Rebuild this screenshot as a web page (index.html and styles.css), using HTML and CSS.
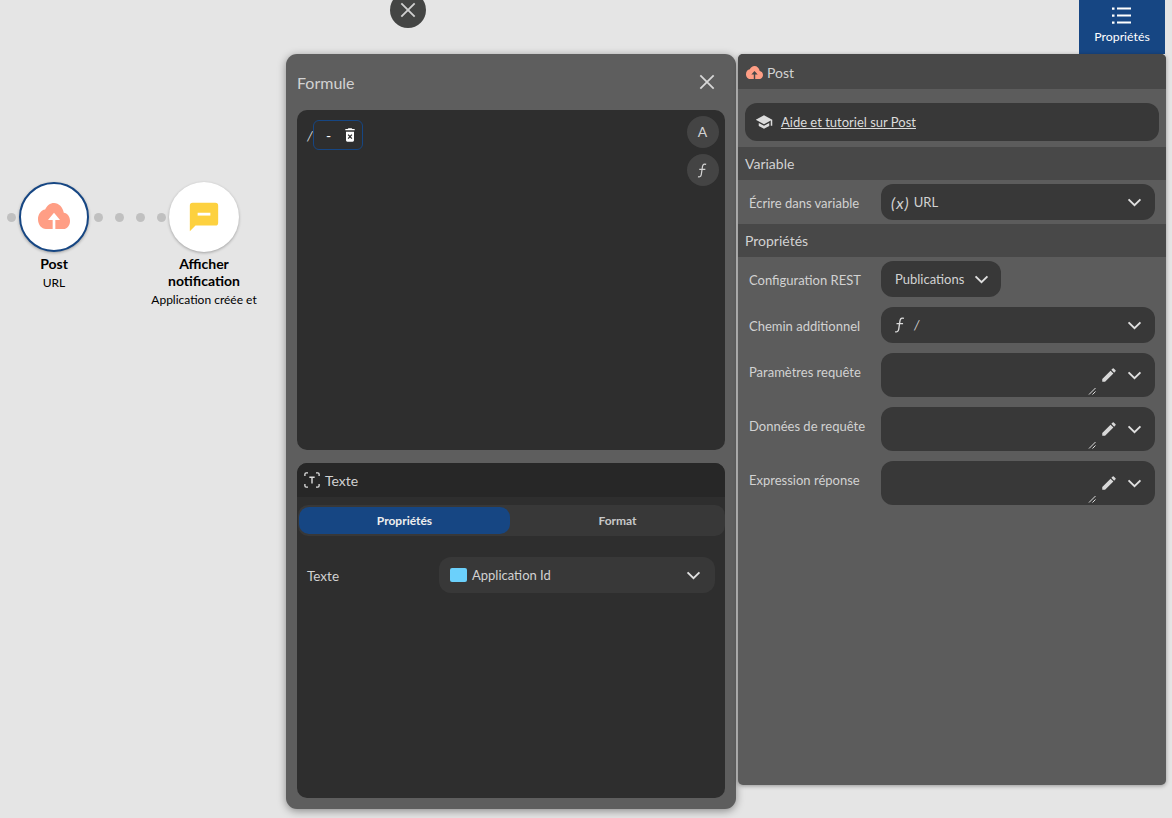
FILE: index.html
```html
<!DOCTYPE html>
<html lang="fr">
<head>
<meta charset="utf-8">
<title>Formule</title>
<link rel="stylesheet" href="styles.css">
</head>
<body>
<svg width="0" height="0" class="defs">
  <symbol id="cloud" viewBox="0 4 24 16" preserveAspectRatio="none"><path d="M19.35 10.04C18.67 6.59 15.64 4 12 4 9.11 4 6.6 5.64 5.35 8.04 2.34 8.36 0 10.95 0 14c0 3.31 2.69 6 6 6h5v-5.500H7.500L12 10l4.500 4.500H13V20h6c2.760 0 5-2.240 5-5 0-2.640-2.050-4.780-4.650-4.960z"/></symbol>
  <symbol id="chev" viewBox="0 0 24 24"><path d="M4.500 8 12 15.500 19.500 8" fill="none" stroke="currentColor" stroke-width="2.400"/></symbol>
  <symbol id="pen" viewBox="0 0 24 24"><path fill="currentColor" d="M3 17.250V21h3.750L17.810 9.940l-3.750-3.750L3 17.250zM20.710 7.040a1 1 0 0 0 0-1.410l-2.340-2.340a1 1 0 0 0-1.410 0l-1.830 1.830 3.750 3.750 1.830-1.830z"/></symbol>
  <symbol id="resize" viewBox="0 0 8 8"><path d="M1 7.500 7.500 1M4.500 7.500l3-3" stroke="#ddd" stroke-width="1" fill="none"/></symbol>
  <symbol id="fn" viewBox="0 0 16 20"><path d="M12.500 2.500C10 1.500 8.500 2.500 8 5L6.500 15c-.4 2.500-2 3.300-4 2.500M4 8.500h7.500" fill="none" stroke="currentColor" stroke-width="1.500"/></symbol>
</svg>

<div class="node node-post">
  <span class="disc disc-active"><svg class="cloud-big"><use href="#cloud"/></svg></span>
  <b class="node-title">Post</b>
  <span class="node-sub">URL</span>
</div>
<div class="node node-notif">
  <span class="disc"><svg class="msg" viewBox="0 0 24 24"><path fill="#fdd13f" d="M4 2h16a2 2 0 0 1 2 2v12a2 2 0 0 1-2 2H6l-4 4V4a2 2 0 0 1 2-2z"/><path fill="#fff" d="M7.500 9h9v2h-9z"/></svg></span>
  <b class="node-title">Afficher notification</b>
  <span class="node-sub">Application créée et</span>
</div>
<i class="dot d1"></i><i class="dot d2"></i><i class="dot d3"></i><i class="dot d4"></i><i class="dot d5"></i>

<button class="close-round"><svg viewBox="0 0 24 24"><path d="M4 4l16 16M20 4 4 20" stroke="currentColor" stroke-width="2.200"/></svg></button>

<div class="tab-props">
  <svg viewBox="0 0 20 20"><path d="M5 3.500h14M5 10.500h14M5 17.500h14" stroke="#fff" stroke-width="1.800"/><path d="M0 2.500h2.500v2.200H0zM0 9.500h2.500v2.200H0zM0 16.500h2.500v2.200H0z" fill="#fff"/></svg>
  <span>Propriétés</span>
</div>

<section class="formula">
  <header class="formula-head">
    <span>Formule</span>
    <svg viewBox="0 0 24 24"><path d="M4 4l16 16M20 4 4 20" stroke="currentColor" stroke-width="2.100"/></svg>
  </header>
  <div class="editor">
    <div class="tokens">
      <span class="slash">/</span>
      <span class="token">
        <span class="dash">-</span>
        <svg viewBox="0 0 24 24"><path fill="#fff" d="M15.500 3l-1-1h-5l-1 1H5v2h14V3zM6 7v13a2 2 0 0 0 2 2h8a2 2 0 0 0 2-2V7H6z"/><path d="M9.200 11.500l5.600 6M14.800 11.500l-5.600 6" stroke="#2e2e2e" stroke-width="2"/></svg>
      </span>
    </div>
    <div class="editor-tools">
      <span class="tool">A</span>
      <span class="tool"><svg class="fn-icon"><use href="#fn"/></svg></span>
    </div>
  </div>
  <div class="text-card">
    <div class="text-head">
      <svg viewBox="0 0 18 18"><path d="M1 4.500V2.500A1.500 1.500 0 0 1 2.500 1H4.500M13.500 1h2A1.500 1.500 0 0 1 17 2.500V4.500M17 13.500v2a1.500 1.500 0 0 1-1.500 1.500H13.500M4.500 17H2.500A1.500 1.500 0 0 1 1 15.500V13.500" fill="none" stroke="#ddd" stroke-width="1.500"/><path d="M6 6h6M9 6v7" stroke="#ddd" stroke-width="1.600" fill="none"/></svg>
      <span>Texte</span>
    </div>
    <div class="tabs">
      <span class="tab tab-on">Propriétés</span>
      <span class="tab">Format</span>
    </div>
    <div class="text-row">
      <label>Texte</label>
      <div class="select select-dark">
        <i class="swatch"></i>
        <span class="select-text">Application Id</span>
        <svg class="chev"><use href="#chev"/></svg>
      </div>
    </div>
  </div>
</section>

<aside class="props">
  <header class="props-head">
    <svg class="cloud-small"><use href="#cloud"/></svg>
    <span>Post</span>
  </header>
  <div class="help">
    <svg viewBox="0 0 24 24"><path fill="#ddd" d="M12 3 1 9l11 6 9-4.900V17h2V9L12 3zM5 13.200v4L12 21l7-3.800v-4L12 17l-7-3.800z"/></svg>
    <a>Aide et tutoriel sur Post</a>
  </div>
  <h3 class="section">Variable</h3>
  <div class="row">
    <label>Écrire dans variable</label>
    <div class="select">
      <em class="var-mark">(x)</em>
      <span class="select-text">URL</span>
      <svg class="chev"><use href="#chev"/></svg>
    </div>
  </div>
  <h3 class="section">Propriétés</h3>
  <div class="row">
    <label>Configuration REST</label>
    <div class="select select-fit">
      <span class="select-text">Publications</span>
      <svg class="chev"><use href="#chev"/></svg>
    </div>
  </div>
  <div class="row gap">
    <label>Chemin additionnel</label>
    <div class="select">
      <svg class="fn-mark"><use href="#fn"/></svg>
      <span class="select-text slash-small">/</span>
      <svg class="chev"><use href="#chev"/></svg>
    </div>
  </div>
  <div class="row gap row-tall">
    <label>Paramètres requête</label>
    <div class="select select-area">
      <svg class="pen"><use href="#pen"/></svg>
      <svg class="chev"><use href="#chev"/></svg>
      <svg class="grip"><use href="#resize"/></svg>
    </div>
  </div>
  <div class="row gap row-tall">
    <label>Données de requête</label>
    <div class="select select-area">
      <svg class="pen"><use href="#pen"/></svg>
      <svg class="chev"><use href="#chev"/></svg>
      <svg class="grip"><use href="#resize"/></svg>
    </div>
  </div>
  <div class="row gap row-tall">
    <label>Expression réponse</label>
    <div class="select select-area">
      <svg class="pen"><use href="#pen"/></svg>
      <svg class="chev"><use href="#chev"/></svg>
      <svg class="grip"><use href="#resize"/></svg>
    </div>
  </div>
</aside>
</body>
</html>
```
FILE: styles.css
```css
* { box-sizing: border-box; }
html, body { margin: 0; height: 100%; }
body {
  position: relative;
  width: 1172px;
  height: 818px;
  overflow: hidden;
  background: #e5e5e5;
  font-family: Lato, sans-serif;
  font-size: 14px;
  color: #d2d2d2;
}
.defs { position: absolute; }

/* Diagram */
.node {
  position: absolute;
  top: 182px;
  width: 110px;
  display: flex;
  flex-direction: column;
  align-items: center;
  text-align: center;
  color: #000;
}
.node-post { left: -1px; }
.node-notif { left: 149px; }
.disc {
  width: 70px;
  height: 70px;
  border-radius: 50%;
  background: #fff;
  box-shadow: 0 1px 3px rgba(0,0,0,.3);
  display: flex;
  align-items: center;
  justify-content: center;
  margin-bottom: 3px;
}
.disc-active { border: 2px solid #164683; }
.cloud-big { width: 32px; height: 26px; fill: #ff9e85; margin-top: -2px; }
.msg { width: 34px; height: 34px; }
.node-title { font-size: 14px; line-height: 17px; font-weight: 700; width: 90px; }
.node-sub { font-size: 12px; line-height: 14px; margin-top: 4px; white-space: nowrap; }
.dot {
  position: absolute;
  top: 213px;
  width: 9px;
  height: 9px;
  border-radius: 50%;
  background: #c0c0c0;
}
.d1 { left: 7px; }
.d2 { left: 94px; }
.d3 { left: 115px; }
.d4 { left: 136px; }
.d5 { left: 157px; }

/* Floating controls */
.close-round {
  position: absolute;
  left: 390px;
  top: -8px;
  width: 36px;
  height: 36px;
  padding: 8px;
  border: 0;
  border-radius: 50%;
  background: #444544;
  color: #d0d0d0;
}
.close-round svg { display: block; width: 20px; height: 20px; }
.tab-props {
  position: absolute;
  left: 1079px;
  top: 0;
  width: 86px;
  height: 54px;
  background: #164683;
  color: #fff;
  font-size: 12.300px;
  display: flex;
  flex-direction: column;
  align-items: center;
  padding-top: 5px;
  gap: 4px;
}
.tab-props svg { width: 20px; height: 20px; }

/* Formula window */
.formula {
  position: absolute;
  left: 286px;
  top: 54px;
  width: 450px;
  height: 755px;
  padding: 0 11px 11px;
  border-radius: 11px;
  background: #5e5e5e;
  box-shadow: 0 2px 8px rgba(0,0,0,.4);
  display: flex;
  flex-direction: column;
}
.formula-head {
  height: 56px;
  flex: none;
  display: flex;
  align-items: center;
  justify-content: space-between;
  font-size: 16px;
  color: #d2d2d2;
  padding: 0 8px 0 0;
}
.formula-head svg { width: 20px; height: 20px; color: #d8d8d8; }
.editor {
  height: 340px;
  flex: none;
  background: #2e2e2e;
  border-radius: 10px;
  padding: 10px 6px 0 10px;
  display: flex;
  justify-content: space-between;
  align-items: flex-start;
}
.tokens { display: flex; align-items: center; }
.slash { font-size: 14px; font-style: italic; width: 6px; }
.token {
  width: 50px;
  height: 30px;
  border: 1px solid #164683;
  border-radius: 6px;
  display: flex;
  align-items: center;
  padding-left: 12px;
  color: #fff;
  gap: 11px;
}
.dash { font-size: 14px; }
.token svg { width: 16px; height: 16px; }
.editor-tools { display: flex; flex-direction: column; gap: 6px; margin-top: -4px; }
.tool {
  width: 32px;
  height: 32px;
  border-radius: 50%;
  background: #444;
  display: flex;
  align-items: center;
  justify-content: center;
  font-size: 14px;
  padding: 0 1px 2px 0;
  color: #d2d2d2;
}
.fn-icon { width: 13px; height: 17px; margin-top: 2px; }
.text-card {
  margin-top: 13px;
  flex: 1;
  background: #2e2e2e;
  border-radius: 10px;
  overflow: hidden;
}
.text-head {
  height: 34px;
  background: #272727;
  display: flex;
  align-items: center;
  gap: 5px;
  padding-left: 7px;
  font-size: 14px;
}
.text-head svg { width: 16px; height: 16px; }
.tabs {
  height: 31px;
  margin: 8px 0 0 1px;
  background: #383838;
  border-radius: 10px;
  padding: 2px 0 2px 1px;
  display: flex;
}
.tab {
  flex: 1;
  display: flex;
  align-items: center;
  justify-content: center;
  font-size: 12px;
  font-weight: 700;
  color: #c8c8c8;
  border-radius: 10px;
}
.tab-on { flex: none; width: 211px; background: #164683; color: #eee; }
.text-row {
  display: flex;
  align-items: center;
  margin-top: 21px;
  padding: 0 10px;
}
.text-row label { width: 132px; font-size: 13.500px; padding-top: 2px; }

/* Selects */
.select {
  flex: 1;
  height: 36px;
  background: #383838;
  border-radius: 12px;
  display: flex;
  align-items: center;
  padding: 0 11px 0 10px;
  position: relative;
}
.select-dark { padding: 0 12px 0 11px; }
.select-text { flex: 1; font-size: 13px; line-height: 18px; }
.swatch {
  width: 17px;
  height: 14px;
  margin-right: 5px;
  border-radius: 2px;
  background: #6bd0fb;
}
.chev { width: 19px; height: 19px; color: #e0e0e0; flex: none; }
.var-mark {
  font-size: 16px;
  margin-right: 4px;
  font-style: italic;
  letter-spacing: 1px;
}
.fn-mark { width: 14px; height: 18px; margin: 0 7px 0 2px; color: #dcdcdc; flex: none; }
.slash-small { font-style: italic; }
.select-fit { flex: none; width: 120px; padding: 0 10px 0 14px; }
.select-area { height: 44px; justify-content: flex-end; gap: 7px; }
.pen { width: 18px; height: 18px; color: #d8d8d8; }
.grip { position: absolute; left: 207px; bottom: 2px; width: 8px; height: 8px; }

/* Properties panel */
.props {
  position: absolute;
  left: 738px;
  top: 54px;
  width: 428px;
  height: 731px;
  background: #5c5c5c;
  border-radius: 5px;
  box-shadow: 0 1px 4px rgba(0,0,0,.35);
  overflow: hidden;
}
.props-head {
  height: 35px;
  background: #484848;
  display: flex;
  align-items: center;
  gap: 4px;
  padding: 1px 0 0 8px;
  font-size: 14px;
}
.cloud-small { width: 17px; height: 13px; fill: #ff9e85; }
.help {
  margin: 14px 7px 0;
  height: 38px;
  background: #383838;
  border-radius: 12px;
  display: flex;
  align-items: center;
  padding-left: 10px;
  gap: 8px;
}
.help svg { width: 18px; height: 18px; }
.help a { text-decoration: underline; font-size: 13px; color: #dcdcdc; }
.section {
  margin: 6px 0 0;
  height: 33px;
  background: #484848;
  display: flex;
  align-items: center;
  padding-left: 7px;
  font-size: 14px;
  font-weight: 400;
  color: #d2d2d2;
}
.section + .row { margin-top: 4px; }
.row {
  display: flex;
  align-items: center;
  padding: 0 11px;
}
.row + .section { margin-top: 4px; }
.row label { width: 132px; flex: none; font-size: 13px; padding-top: 2px; }
.gap { margin-top: 10px; }
.row-tall { align-items: flex-start; }
.row-tall label { padding-top: 11px; }
```
